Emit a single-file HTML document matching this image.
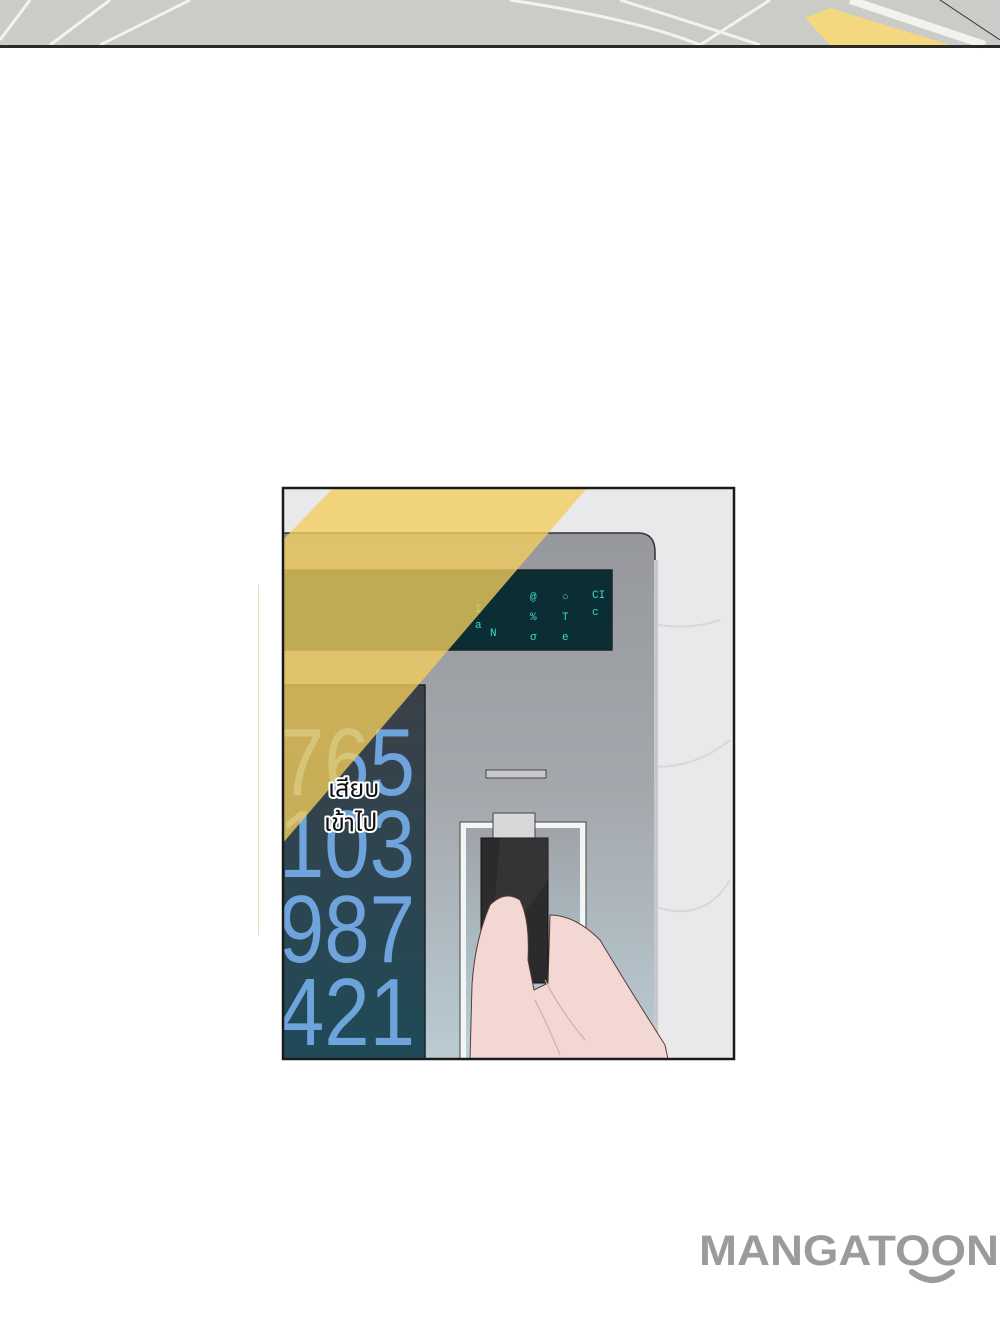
<!DOCTYPE html>
<html><head><meta charset="utf-8"><style>
html,body{margin:0;padding:0;background:#fff;width:1000px;height:1341px;overflow:hidden}
svg{display:block}
</style></head><body>
<svg width="1000" height="1341" viewBox="0 0 1000 1341" xmlns="http://www.w3.org/2000/svg">
<defs>
<linearGradient id="plate" x1="0" y1="0" x2="0" y2="1">
<stop offset="0" stop-color="#96989d"/><stop offset="0.5" stop-color="#a4a8ad"/><stop offset="1" stop-color="#b9cbd3"/></linearGradient>
<linearGradient id="num" x1="0" y1="0" x2="0" y2="1">
<stop offset="0" stop-color="#3b4048"/><stop offset="1" stop-color="#1f4a58"/></linearGradient>
<linearGradient id="port" x1="0" y1="0" x2="0" y2="1">
<stop offset="0" stop-color="#9fa3a8"/><stop offset="1" stop-color="#b8d2dc"/></linearGradient>
<clipPath id="pc"><rect x="283" y="488" width="451" height="571"/></clipPath>
</defs>
<rect x="0" y="0" width="1000" height="45" fill="#cbcbc8"/>
<path d="M0 40 L30 0 M50 45 L110 0 M100 45 L190 0" stroke="#f2f2f0" stroke-width="3"/>
<path d="M510 0 Q640 20 700 45 M620 0 Q700 25 760 45 M700 45 L770 0" stroke="#f2f2f0" stroke-width="3" fill="none"/>
<polygon points="805,18 830,8 950,45 830,45" fill="#f4d880"/>
<path d="M850 0 L985 45" stroke="#f2f2f0" stroke-width="8"/>
<path d="M940 0 L1000 40" stroke="#333" stroke-width="1"/>
<rect x="0" y="45" width="1000" height="3" fill="#2a2a2a"/>
<rect x="258" y="585" width="1" height="350" fill="#e8dfb8"/>
<g clip-path="url(#pc)">
<rect x="283" y="488" width="451" height="571" fill="#e9e9eb"/>
<path d="M600 600 Q660 640 720 620 M620 760 Q680 780 730 740 M640 900 Q700 930 730 880" stroke="#d8d8da" stroke-width="2" fill="none"/>
<path d="M283 533 H638 Q655 533 655 552 V1059 H283 Z" fill="url(#plate)" stroke="#333" stroke-width="1.5"/>
<path d="M656 560 V1059" stroke="#c8c8cc" stroke-width="4"/>
<rect x="283" y="570" width="329" height="80" fill="#0b2e35" stroke="#222" stroke-width="1.5"/>
<g fill="#3fd6c4" font-family="Liberation Mono,monospace" font-size="11">
<text x="530" y="600">@</text><text x="530" y="620">%</text><text x="530" y="640">σ</text>
<text x="562" y="600">○</text><text x="562" y="620">T</text><text x="562" y="640">e</text>
<text x="592" y="598">CI</text><text x="592" y="615">c</text>
<text x="475" y="612">I</text><text x="475" y="628">a</text><text x="490" y="636">N</text>
</g>
<rect x="283" y="685" width="142" height="374" fill="url(#num)" stroke="#222" stroke-width="1.5"/>
<g fill="#6ea3dc" font-family="Liberation Sans,sans-serif" font-size="96" text-anchor="end">
<text x="415" y="795" transform="translate(415 0) scale(0.85 1) translate(-415 0)">765</text>
<text x="415" y="877" transform="translate(415 0) scale(0.85 1) translate(-415 0)">103</text>
<text x="415" y="962" transform="translate(415 0) scale(0.85 1) translate(-415 0)">987</text>
<text x="415" y="1045" transform="translate(415 0) scale(0.85 1) translate(-415 0)">421</text>
</g>
<polygon points="333,488 587,488 283,843 283,540" fill="#f3cd5c" opacity="0.78"/>
<rect x="486" y="770" width="60" height="8" fill="#c8c8cb" stroke="#444" stroke-width="1"/>
<rect x="460" y="822" width="126" height="240" fill="#f2f4f5" stroke="#444" stroke-width="1"/>
<rect x="466" y="828" width="114" height="231" fill="url(#port)"/>
<rect x="493" y="813" width="42" height="27" fill="#d8d8d8" stroke="#444"/>
<rect x="481" y="838" width="67" height="145" fill="#2b2b2d" stroke="#111"/>
<polygon points="500,838 548,838 548,880 490,960" fill="#3a3a3d" opacity="0.6"/>
<path d="M470 1059 L472 985 Q475 940 490 905 Q505 890 520 900 Q530 920 528 960 L534 990 L548 983 L550 915 Q575 915 600 940 Q630 990 665 1045 L668 1059 Z" fill="#f3d7d3" stroke="#5a3a38" stroke-width="1"/>
<path d="M545 980 Q560 1010 585 1040 M535 1000 Q550 1030 560 1055" stroke="#c9a9a5" fill="none"/>
<g font-family="Liberation Sans,'Noto Sans Thai',sans-serif" font-size="25" fill="#111" stroke="#fff" stroke-width="4" paint-order="stroke" stroke-linejoin="round">
<text x="328" y="797">เสียบ</text>
<text x="324" y="831">เข้าไป</text>
</g>
</g>
<rect x="283" y="488" width="451" height="571" fill="none" stroke="#1a1a1a" stroke-width="2.5"/>
<text x="699" y="1265" font-family="Liberation Sans,sans-serif" font-weight="bold" font-size="43" fill="#9b9b9b" textLength="300" lengthAdjust="spacingAndGlyphs">MANGATOON</text>
<path d="M912 1272 Q933 1288 952 1272" stroke="#9b9b9b" stroke-width="6" fill="none" stroke-linecap="round"/>
</svg>
</body></html>
